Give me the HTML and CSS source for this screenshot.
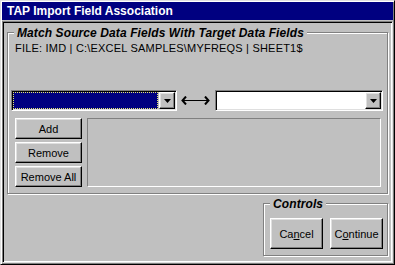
FILE: index.html
```html
<!DOCTYPE html>
<html lang="en">
<head>
    <meta charset="UTF-8">
    <title>TAP Import Field Association</title>
    <link rel="stylesheet" href="styles.css">
</head>
<body>

    <!-- Janela do dialogo -->
    <div class="window">
        <div class="titlebar">TAP Import Field Association</div>

        <div class="client">

            <!-- Grupo de associacao de campos -->
            <div class="group match-group">
                <span class="group-label">Match Source Data Fields With Target Data Fields</span>
                <div class="file-path">FILE: IMD | C:\EXCEL SAMPLES\MYFREQS | SHEET1$</div>

                <div class="combo-row">
                    <div class="combo source-combo">
                        <div class="combo-value selected"></div>
                        <button class="btn combo-btn">
                            <svg width="7" height="4" viewBox="0 0 7 4"><polygon points="0,0 7,0 3.5,4" fill="#000"/></svg>
                        </button>
                    </div>

                    <svg class="link-arrow" width="29" height="9" viewBox="0 0 29 9">
                        <polyline points="5,0.5 1.5,4.5 5,8.5" fill="none" stroke="#000" stroke-width="2"/>
                        <line x1="2" y1="4.5" x2="27" y2="4.5" stroke="#000" stroke-width="1"/>
                        <polyline points="24,0.5 27.5,4.5 24,8.5" fill="none" stroke="#000" stroke-width="2"/>
                    </svg>

                    <div class="combo target-combo">
                        <div class="combo-value"></div>
                        <button class="btn combo-btn">
                            <svg width="7" height="4" viewBox="0 0 7 4"><polygon points="0,0 7,0 3.5,4" fill="#000"/></svg>
                        </button>
                    </div>
                </div>

                <div class="mapping">
                    <div class="button-col">
                        <button class="btn">Add</button>
                        <button class="btn">Remove</button>
                        <button class="btn">Remove All</button>
                    </div>
                    <div class="list-panel"></div>
                </div>
            </div>

            <!-- Botoes de controle -->
            <div class="group controls-group">
                <span class="group-label">Controls</span>
                <div class="controls-row">
                    <button class="btn big-btn">Ca<u>n</u>cel</button>
                    <button class="btn big-btn">C<u>o</u>ntinue</button>
                </div>
            </div>

        </div>
    </div>

</body>
</html>
```

FILE: styles.css
```css
body {
    margin: 0;
    padding: 0;
    background-color: #c0c0c0;
    font-family: "Liberation Sans", Arial, sans-serif;
    font-size: 11px;
    color: #000;
}

.window {
    width: 395px;
    height: 265px;
    box-sizing: border-box;
    display: flex;
    flex-direction: column;
    padding: 1px;
    border: 1px solid;
    border-color: #dfdfdf #000 #000 #dfdfdf;
    box-shadow: inset 1px 1px #fff, inset -1px -1px #808080;
    background-color: #c0c0c0;
}

.titlebar {
    height: 18px;
    margin-bottom: 1px;
    padding-left: 5px;
    background-color: #000080;
    color: #fff;
    font-weight: bold;
    font-size: 12px;
    line-height: 18px;
}

.client {
    flex: 1;
    display: flex;
    flex-direction: column;
    padding: 1px;
    border: 1px solid;
    border-color: #808080 #dfdfdf #dfdfdf #808080;
    box-shadow: inset 1px 1px #000, inset -1px -1px #fff;
}

/* Caixa de grupo com borda gravada */
.group {
    position: relative;
    box-sizing: border-box;
    border: 1px solid #808080;
    box-shadow: inset 1px 1px #fff, 1px 1px #fff;
}

.group-label {
    position: absolute;
    top: -7px;
    left: 6px;
    padding: 0 3px;
    background-color: #c0c0c0;
    font-size: 12px;
    line-height: 14px;
    font-weight: bold;
    font-style: italic;
    letter-spacing: 0.1px;
}

.match-group {
    margin: 9px 3px 0 3px;
    height: 162px;
    padding: 9px 3px 0 3px;
}

.file-path {
    margin-left: 4px;
    line-height: 13px;
    letter-spacing: 0.2px;
}

.combo-row {
    display: flex;
    align-items: center;
    margin-top: 35px;
}

.combo {
    display: flex;
    height: 21px;
    box-sizing: border-box;
    padding: 1px;
    border: 1px solid;
    border-color: #808080 #fff #fff #808080;
    box-shadow: inset 1px 1px #000, inset -1px -1px #dfdfdf;
}

.source-combo {
    width: 166px;
}

.target-combo {
    width: 168px;
}

.combo-value {
    flex: 1;
    background-color: #fff;
}

.combo-value.selected {
    background-color: #000080;
    outline: 1px dotted #e8e870;
    outline-offset: -1px;
    margin-right: 1px;
}

.link-arrow {
    margin: 0 5px 0 4px;
}

.btn {
    box-sizing: border-box;
    padding: 0;
    border: 1px solid;
    border-color: #fff #000 #000 #fff;
    box-shadow: inset -1px -1px #808080, inset 1px 1px #dfdfdf;
    background-color: #c0c0c0;
    font-family: "Liberation Sans", Arial, sans-serif;
    font-size: 11px;
    color: #000;
}

.combo-btn {
    width: 16px;
    height: 17px;
    display: flex;
    align-items: center;
    justify-content: center;
}

.mapping {
    display: flex;
    margin-top: 7px;
}

.button-col {
    display: flex;
    flex-direction: column;
    gap: 3px;
    margin-left: 4px;
}

.button-col .btn {
    width: 67px;
    height: 21px;
}

.list-panel {
    width: 294px;
    height: 69px;
    margin-left: 5px;
    box-sizing: border-box;
    border: 1px solid;
    border-color: #808080 #fff #fff #808080;
}

.controls-group {
    margin: 9px 3px 0 auto;
    width: 125px;
    height: 53px;
}

.controls-row {
    display: flex;
    gap: 7px;
    padding: 14px 0 0 6px;
}

.big-btn {
    width: 53px;
    height: 31px;
}
```
